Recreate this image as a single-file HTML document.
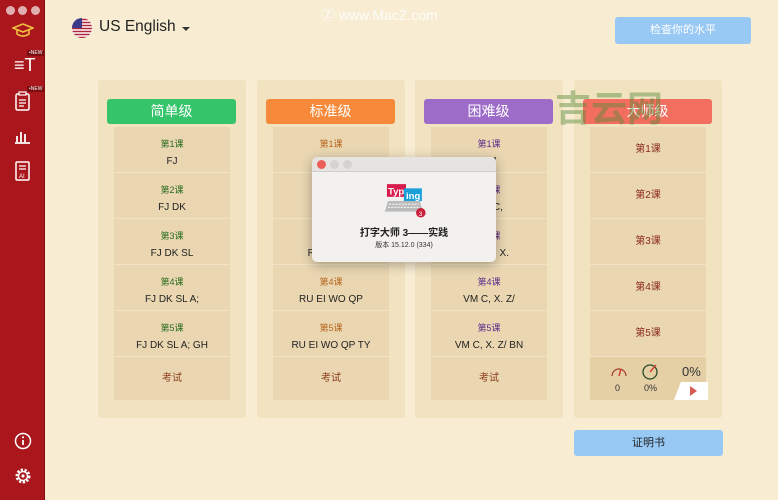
<!DOCTYPE html><html><head><meta charset="utf-8"><style>
*{margin:0;padding:0;box-sizing:border-box}
body{width:778px;height:500px;background:#f8edd3;font-family:"Liberation Sans","Noto Sans CJK SC",sans-serif;position:relative;overflow:hidden}
.side{position:absolute;left:0;top:0;width:45px;height:500px;background:#a9161b;border-right:1px solid #8a0f12}
.a{position:absolute}
.col{position:absolute;top:80px;width:148px;height:338px;background:#f1e2c0;border-radius:3px}
.hd{position:absolute;left:9px;top:19px;width:129px;height:25px;border-radius:3px;color:#fff;font-size:14px;text-align:center;line-height:25px}
.list{position:absolute;left:16px;top:47px;width:116px;height:273px;background:#ead7b2}
.row{height:46px;border-bottom:1px solid #f1e4c6;text-align:center;font-size:10px;color:#222;padding-top:9px;line-height:17px}
.row b{display:block;font-weight:normal;font-size:9px}
.ex{height:43px;line-height:43px;text-align:center;font-size:10px;color:#8b3a1a}
.dot{position:absolute;top:6px;width:9px;height:9px;border-radius:50%;background:#d9d9d9}
</style></head><body>
<div class="side">
<div class="dot" style="left:6px;background:#e0b0b0"></div><div class="dot" style="left:18px;background:#e0b0b0"></div><div class="dot" style="left:31px;background:#e0b0b0"></div>
<svg class="a" style="left:12px;top:22px" width="22" height="16" viewBox="0 0 22 16"><path d="M1 6L11 2L21 6L11 10Z" fill="none" stroke="#f0c040" stroke-width="1.6"/><path d="M5 8v4q6 4 12 0V8" fill="none" stroke="#f0c040" stroke-width="1.6"/></svg>
<div class="a" style="left:27px;top:50px;font-size:5px;color:#fff;background:#7a0e10;padding:0 2px">•NEW</div>
<div class="a" style="left:14px;top:55px;color:#fff;font-size:18px;line-height:20px">≡T</div>
<div class="a" style="left:27px;top:86px;font-size:5px;color:#fff;background:#7a0e10;padding:0 2px">•NEW</div>
<svg class="a" style="left:15px;top:91px" width="15" height="20" viewBox="0 0 15 20"><rect x="1" y="3" width="13" height="16" rx="1.5" fill="none" stroke="#fff" stroke-width="1.5"/><rect x="4" y="1" width="7" height="3" fill="#a9161b" stroke="#fff" stroke-width="1.2"/><path d="M4 9h7M4 12h7M4 15h5" stroke="#fff" stroke-width="1.2"/></svg>
<svg class="a" style="left:14px;top:128px" width="17" height="16" viewBox="0 0 17 16"><path d="M3 8v6M7 4v10M11 6v8M1 15h15" stroke="#fff" stroke-width="1.8" fill="none"/></svg>
<svg class="a" style="left:15px;top:161px" width="15" height="20" viewBox="0 0 15 20"><rect x="1" y="1" width="13" height="18" rx="1" fill="none" stroke="#fff" stroke-width="1.5"/><path d="M4 5h7M4 8h7" stroke="#fff" stroke-width="1.2"/><text x="4" y="17" font-size="6" fill="#fff" font-family="Liberation Sans">AI</text></svg>
<svg class="a" style="left:14px;top:432px" width="18" height="18" viewBox="0 0 18 18"><circle cx="9" cy="9" r="7.5" fill="none" stroke="#fff" stroke-width="1.5"/><path d="M9 8v5" stroke="#fff" stroke-width="1.8"/><circle cx="9" cy="5.3" r="1.1" fill="#fff"/></svg>
<svg class="a" style="left:14px;top:467px" width="18" height="18" viewBox="0 0 18 18"><circle cx="9" cy="9" r="6" fill="none" stroke="#fff" stroke-width="3" stroke-dasharray="2.2 1.5"/><circle cx="9" cy="9" r="4.5" fill="none" stroke="#fff" stroke-width="1.4"/><circle cx="9" cy="9" r="1.6" fill="#fff"/></svg>
</div>
<svg class="a" style="left:72px;top:18px" width="20" height="20" viewBox="0 0 20 20"><defs><clipPath id="c"><circle cx="10" cy="10" r="10"/></clipPath></defs><g clip-path="url(#c)"><rect width="20" height="20" fill="#fff"/><path d="M0 1.5h20M0 4.5h20M0 7.5h20M0 10.5h20M0 13.5h20M0 16.5h20M0 19.5h20" stroke="#b0243a" stroke-width="1.6"/><rect width="10" height="10" fill="#3b3b8a"/></g></svg>
<div class="a" style="left:99px;top:18px;font-size:15.5px;color:#222">US English</div>
<div class="a" style="left:182px;top:27px;width:0;height:0;border-left:4px solid transparent;border-right:4px solid transparent;border-top:4px solid #333"></div>
<div class="a" style="left:321px;top:5px;font-size:14px;color:#fff;opacity:.85">Ⓩ www.MacZ.com</div>
<div class="a" style="left:615px;top:17px;width:136px;height:27px;background:#98c9f5;border-radius:3px;color:#fff;font-size:11px;text-align:center;line-height:27px">检查你的水平</div>

<div class="col" style="left:98px"><div class="hd" style="background:#35c46a">简单级</div><div class="list">
<div class="row" style="color:#222"><b style="color:#2b6b1f">第1课</b>FJ</div>
<div class="row"><b style="color:#2b6b1f">第2课</b>FJ DK</div>
<div class="row"><b style="color:#2b6b1f">第3课</b>FJ DK SL</div>
<div class="row"><b style="color:#2b6b1f">第4课</b>FJ DK SL A;</div>
<div class="row"><b style="color:#2b6b1f">第5课</b>FJ DK SL A; GH</div>
<div class="ex">考试</div></div></div>

<div class="col" style="left:257px"><div class="hd" style="background:#f68a3a">标准级</div><div class="list">
<div class="row"><b style="color:#b5651d">第1课</b>RU</div>
<div class="row"><b style="color:#b5651d">第2课</b>RU EI</div>
<div class="row"><b style="color:#b5651d">第3课</b>RU EI WO</div>
<div class="row"><b style="color:#b5651d">第4课</b>RU EI WO QP</div>
<div class="row"><b style="color:#b5651d">第5课</b>RU EI WO QP TY</div>
<div class="ex">考试</div></div></div>

<div class="col" style="left:415px"><div class="hd" style="background:#9d6cc9">困难级</div><div class="list">
<div class="row"><b style="color:#5b2d8a">第1课</b>VM</div>
<div class="row"><b style="color:#5b2d8a">第2课</b>VM C,</div>
<div class="row"><b style="color:#5b2d8a">第3课</b>VM C, X.</div>
<div class="row"><b style="color:#5b2d8a">第4课</b>VM C, X. Z/</div>
<div class="row"><b style="color:#5b2d8a">第5课</b>VM C, X. Z/ BN</div>
<div class="ex">考试</div></div></div>

<div class="col" style="left:574px"><div class="hd" style="background:#f26e5e">大师级</div><div class="list">
<div class="row" style="line-height:28px;color:#8b2a1a">第1课</div>
<div class="row" style="line-height:28px;color:#8b2a1a">第2课</div>
<div class="row" style="line-height:28px;color:#8b2a1a">第3课</div>
<div class="row" style="line-height:28px;color:#8b2a1a">第4课</div>
<div class="row" style="line-height:28px;color:#8b2a1a">第5课</div>
<div style="position:relative;height:43px;background:#e5d0a6">
<svg class="a" style="left:20px;top:6px" width="18" height="16" viewBox="0 0 18 16"><path d="M2 13A7 7 0 0 1 16 13" fill="none" stroke="#a04030" stroke-width="1.2"/><path d="M9 13L11 6" stroke="#d04030" stroke-width="1.5"/></svg>
<div class="a" style="left:25px;top:26px;font-size:9px;color:#333">0</div>
<svg class="a" style="left:52px;top:5px" width="18" height="18" viewBox="0 0 18 18"><circle cx="8" cy="10" r="7" fill="none" stroke="#2a4a2a" stroke-width="1.3"/><path d="M8 10L14 3" stroke="#d04030" stroke-width="1.5"/></svg>
<div class="a" style="left:54px;top:26px;font-size:9px;color:#333">0%</div>
<div class="a" style="left:92px;top:7px;font-size:13px;color:#333">0%</div>
<div class="a" style="left:84px;top:25px;width:34px;height:18px;background:#fff;clip-path:polygon(20% 0,100% 0,100% 100%,0 100%)"></div>
<div class="a" style="left:100px;top:29px;border-top:5px solid transparent;border-bottom:5px solid transparent;border-left:7px solid #d85a50"></div>
</div></div></div>

<div class="a" style="left:574px;top:430px;width:149px;height:26px;background:#98c9f5;border-radius:3px;font-size:11px;text-align:center;line-height:26px;color:#222">证明书</div>
<div class="a" style="left:555px;top:89px;font-size:36px;line-height:40px;color:#5a8a3a;opacity:.45;font-weight:bold">吉云网</div>

<div class="a" style="left:312px;top:157px;width:184px;height:105px;background:#f3f1ef;border-radius:5px;box-shadow:0 3px 12px rgba(0,0,0,.3);overflow:hidden">
<div style="height:15px;background:#e6e3e0;border-bottom:1px solid #d0cdca;position:relative">
<div class="a" style="left:5px;top:3px;width:9px;height:9px;border-radius:50%;background:#ec5f57"></div>
<div class="a" style="left:18px;top:3px;width:9px;height:9px;border-radius:50%;background:#d5d2cf"></div>
<div class="a" style="left:31px;top:3px;width:9px;height:9px;border-radius:50%;background:#d5d2cf"></div></div>
<svg class="a" style="left:72px;top:25px" width="44" height="36" viewBox="0 0 40 34"><path d="M3 18h30l3 10H0Z" fill="#bbb"/><path d="M4 21h28M3 24h30" stroke="#eee" stroke-width="1.2" stroke-dasharray="2 1"/><rect x="2" y="2" width="18" height="12" fill="#d81b4c"/><text x="3" y="12" font-size="9" fill="#fff" font-weight="bold" font-family="Liberation Sans">Typ</text><rect x="18" y="6" width="17" height="12" fill="#1aa0d8"/><text x="20" y="16" font-size="9" fill="#fff" font-weight="bold" font-family="Liberation Sans">ing</text><circle cx="34" cy="29" r="4.5" fill="#c8203a"/><text x="32" y="32" font-size="6" fill="#fff" font-family="Liberation Sans">3</text></svg>
<div class="a" style="left:0;width:184px;top:67px;text-align:center;font-size:10px;font-weight:bold;color:#222">打字大师 3——实践</div>
<div class="a" style="left:0;width:184px;top:83px;text-align:center;font-size:7px;color:#333">版本 15.12.0 (334)</div>
</div>
</body></html>
